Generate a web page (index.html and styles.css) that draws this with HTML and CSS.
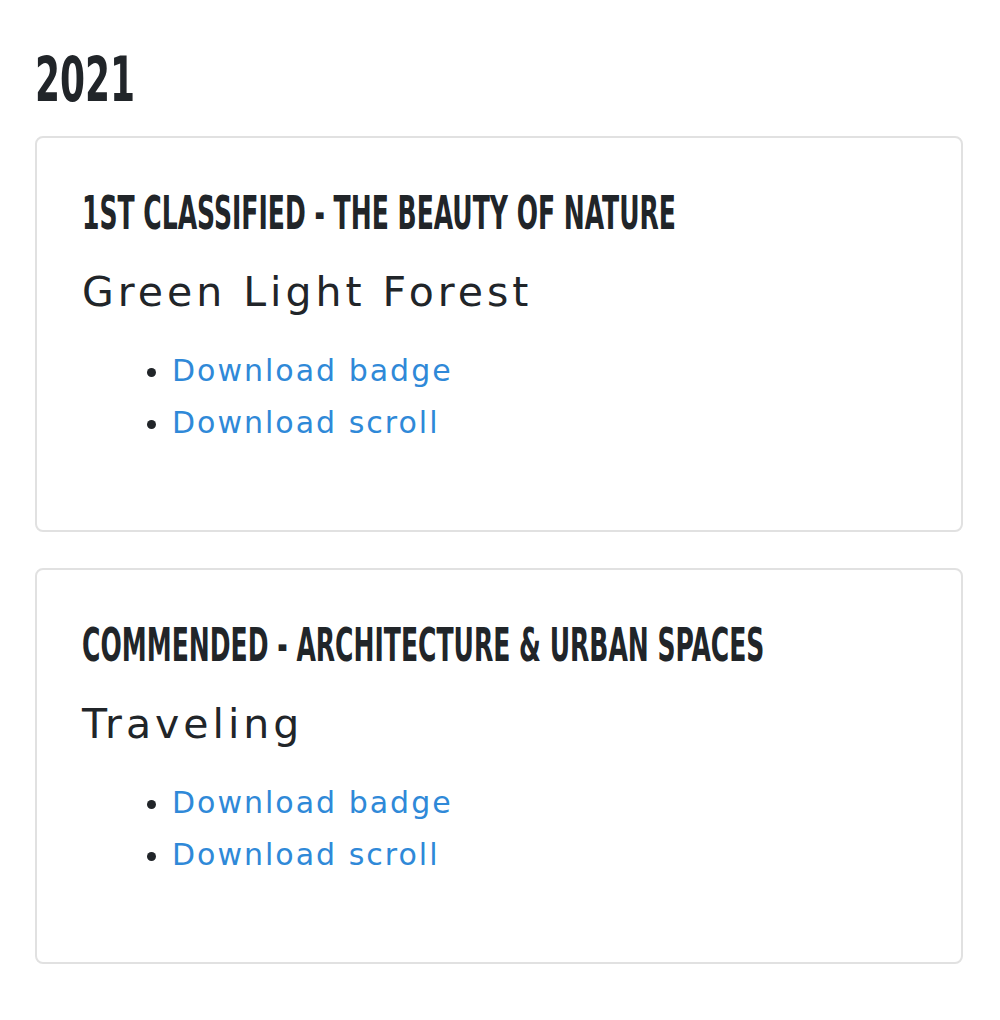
FILE: index.html
```html
<!DOCTYPE html>
<html lang="en">
<head>
<meta charset="utf-8">
<title>2021</title>
<link rel="stylesheet" href="styles.css">
</head>
<body>
<main class="page">
  <h2 class="year"><span class="squeeze">2021</span></h2>
  <section class="card">
    <h3 class="award"><span class="squeeze">1st Classified - The Beauty of Nature</span></h3>
    <p class="entry">Green Light Forest</p>
    <ul class="links">
      <li><a href="#">Download badge</a></li>
      <li><a href="#">Download scroll</a></li>
    </ul>
  </section>
  <section class="card">
    <h3 class="award"><span class="squeeze">Commended - Architecture &amp; Urban Spaces</span></h3>
    <p class="entry">Traveling</p>
    <ul class="links">
      <li><a href="#">Download badge</a></li>
      <li><a href="#">Download scroll</a></li>
    </ul>
  </section>
</main>
</body>
</html>
```
FILE: styles.css
```css
html, body {
  margin: 0;
  background: #ffffff;
}
body {
  font-family: "DejaVu Sans", "Open Sans", sans-serif;
  color: #212529;
}
.page {
  width: 928px;
  padding: 40px 0 0 35px;
  display: flex;
  flex-direction: column;
  gap: 36px;
}
.year {
  margin: 0 0 -20px 0;
  font-family: "DejaVu Sans Condensed", "Liberation Sans Narrow", "Liberation Sans", sans-serif;
  font-weight: 700;
  font-size: 62px;
  line-height: 80px;
}
.year .squeeze {
  transform: scaleX(0.645);
}
.squeeze {
  display: inline-block;
  transform-origin: left center;
  white-space: nowrap;
}
.card {
  border: 2px solid #e1e1e1;
  border-radius: 8px;
  padding: 47px 45px 81px 45px;
}
.award {
  margin: 0;
  overflow: hidden;
  font-family: "DejaVu Sans Condensed", "Liberation Sans Narrow", "Liberation Sans", sans-serif;
  font-weight: 700;
  font-size: 47px;
  line-height: 56px;
  text-transform: uppercase;
}
.award .squeeze {
  transform: scaleX(0.593);
}
.entry {
  margin: 23px 0 0 0;
  font-size: 41px;
  line-height: 56px;
  letter-spacing: 4px;
}
.links {
  margin: 25px 0 0 0;
  padding-left: 90px;
  font-size: 30px;
  line-height: 52px;
  letter-spacing: 2px;
}
.links a {
  color: #2f89d8;
  text-decoration: none;
}
```
